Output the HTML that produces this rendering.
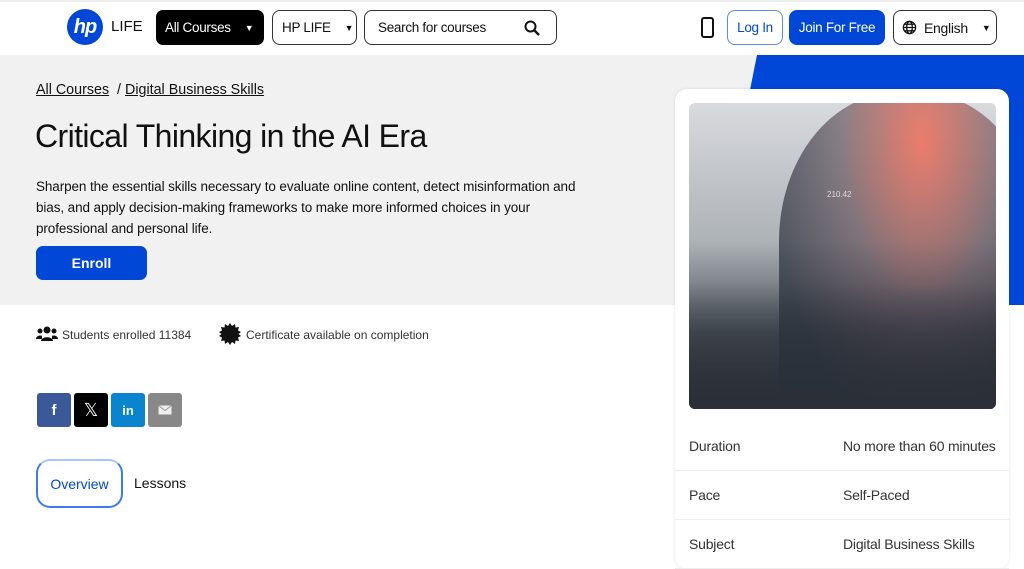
<!DOCTYPE html>
<html><head><meta charset="utf-8"><style>
*{box-sizing:border-box;margin:0;padding:0}
body{width:1024px;height:544px;overflow:hidden;background:#fff;font-family:"Liberation Sans",sans-serif;color:#111;position:relative}
.top{position:absolute;left:0;top:0;width:1024px;height:2px;background:#eee}
.hdr{position:absolute;top:0;left:0;width:1024px;height:55px;background:#fff}
.btn{position:absolute;top:10px;height:35px;border-radius:8px;font-size:13.5px;display:flex;align-items:center;padding:0 12px;white-space:nowrap;letter-spacing:-0.3px}
.hero{position:absolute;top:55px;left:0;width:1024px;height:250px;background:#f1f1f1}
.blue{position:absolute;top:55px;left:0;width:1024px;height:250px;background:#0047d8;clip-path:polygon(757px 0,1024px 0,1024px 250px,707px 250px)}
.card{position:absolute;left:675px;top:89px;width:334px;height:480px;background:#fff;border-radius:12px;box-shadow:0 0 3px rgba(0,0,0,.12)}
.img{position:absolute;left:14px;top:14px;width:307px;height:306px;border-radius:6px;overflow:hidden;background:linear-gradient(180deg,#d8dade 0%,#aeb3b8 45%,#4a5057 75%,#2b3038 100%)}
.row{position:absolute;left:0;width:334px;height:49px;border-bottom:1px solid #eee;font-size:14px;color:#333;letter-spacing:-0.2px}
.row span{position:absolute;top:16px}
.soc{position:absolute;top:393px;width:34px;height:34px;border-radius:3px;color:#fff;display:flex;align-items:center;justify-content:center;font-weight:bold;font-size:15px}
</style></head><body>
<div class="hdr"></div><div class="top"></div>
<div style="position:absolute;left:67px;top:9px;width:36px;height:36px;border-radius:50%;background:#0047d8;color:#fff;font-style:italic;font-weight:bold;font-size:20px;display:flex;align-items:center;justify-content:center;letter-spacing:-1px">hp</div>
<div style="position:absolute;left:111px;top:18px;font-size:15px">LIFE</div>
<div class="btn" style="left:156px;width:108px;background:#000;color:#fff;border-radius:7px;padding:0 9px">All Courses <span style="margin-left:14px;font-size:9px">▼</span></div>
<div class="btn" style="left:272px;width:85px;border:1px solid #333;padding:0 9px">HP LIFE <span style="margin-left:14px;font-size:9px">▼</span></div>
<div class="btn" style="left:364px;width:193px;border:1px solid #333;padding:0 13px">Search for courses
<svg style="position:absolute;right:16px;top:9px" width="16" height="16" viewBox="0 0 16 16"><circle cx="6.5" cy="6.5" r="5" fill="none" stroke="#111" stroke-width="2"/><path d="M10 10l5 5" stroke="#111" stroke-width="2.4"/></svg></div>
<div style="position:absolute;left:701px;top:17px;width:13px;height:21px;border:2.5px solid #111;border-radius:3px"></div>
<div class="btn" style="left:727px;width:56px;border:1px solid #5b8de8;color:#0047d8;justify-content:center;padding:0">Log In</div>
<div class="btn" style="left:789px;width:96px;background:#0047d8;color:#fff;justify-content:center;padding:0">Join For Free</div>
<div class="btn" style="left:893px;width:104px;border:1px solid #333;padding:0 8px">
<svg style="flex:none" width="15" height="15" viewBox="0 0 16 16" fill="none" stroke="#111" stroke-width="1.4"><circle cx="8" cy="8" r="6.5"/><ellipse cx="8" cy="8" rx="3" ry="6.5"/><path d="M1.5 8h13M2.5 4.5h11M2.5 11.5h11"/></svg>
<span style="margin-left:7px;font-size:14px">English</span><span style="margin-left:14px;font-size:9px">▼</span></div>
<div class="hero"></div><div class="blue"></div>
<div style="position:absolute;left:36px;top:82px;font-size:14.3px;letter-spacing:0"><span style="text-decoration:underline">All Courses</span> &nbsp;/ <span style="text-decoration:underline">Digital Business Skills</span></div>
<div style="position:absolute;left:35px;top:118px;font-size:32px;letter-spacing:-0.6px">Critical Thinking in the AI Era</div>
<div style="position:absolute;left:36px;top:176px;width:565px;font-size:13.5px;line-height:21px;letter-spacing:-0.1px">Sharpen the essential skills necessary to evaluate online content, detect misinformation and bias, and apply decision-making frameworks to make more informed choices in your professional and personal life.</div>
<div style="position:absolute;left:36px;top:246px;width:111px;height:34px;background:#0047d8;color:#fff;border-radius:7px;font-size:14px;font-weight:bold;display:flex;align-items:center;justify-content:center">Enroll</div>
<svg style="position:absolute;left:36px;top:326px" width="22" height="16" viewBox="0 0 22 16" fill="#111"><circle cx="11" cy="4" r="3.5"/><circle cx="4" cy="5" r="2.5"/><circle cx="18" cy="5" r="2.5"/><path d="M5 15c0-5 12-5 12 0zM0 13c0-4 6-4 6-3v3zM22 13c0-4-6-4-6-3v3z"/></svg>
<div style="position:absolute;left:62px;top:328px;font-size:12px;color:#333">Students enrolled 11384</div>
<svg style="position:absolute;left:219px;top:323px" width="22" height="22" viewBox="0 0 22 22"><polygon fill="#111" points="11,0 13,3 16,1 16.5,4.5 20,4 19,7.5 22,9 19.5,11 22,13 19,14.5 20,18 16.5,17.5 16,21 13,19 11,22 9,19 6,21 5.5,17.5 2,18 3,14.5 0,13 2.5,11 0,9 3,7.5 2,4 5.5,4.5 6,1 9,3"/></svg>
<div style="position:absolute;left:246px;top:328px;font-size:12px;color:#333">Certificate available on completion</div>
<div class="soc" style="left:37px;background:#3b5998">f</div>
<div class="soc" style="left:74px;background:#000;font-weight:normal;font-size:18px">𝕏</div>
<div class="soc" style="left:111px;background:#0a84ce;font-size:13px">in</div>
<div class="soc" style="left:148px;background:#888"><svg width="14" height="10"><rect x=".5" y=".5" width="13" height="9" fill="#eee"/><path d="M.5 .5l6.5 5 6.5-5" stroke="#999" fill="none"/></svg></div>
<div style="position:absolute;left:36px;top:459px;width:87px;height:49px;border:2px solid #3d7bf0;border-top-color:#a8c4f8;border-radius:14px;color:#0047d8;font-size:14px;display:flex;align-items:center;justify-content:center">Overview</div>
<div style="position:absolute;left:134px;top:475px;font-size:14px">Lessons</div>
<div class="card">
<div class="img">
<div style="position:absolute;left:90px;top:-10px;width:260px;height:330px;background:radial-gradient(ellipse at 55% 15%,rgba(240,110,90,.85),rgba(90,70,80,.6) 40%,rgba(40,48,60,.7) 75%);border-radius:45% 45% 10% 10%"></div>
<div style="position:absolute;left:0;top:180px;width:307px;height:126px;background:linear-gradient(180deg,rgba(40,46,54,0),#2a2f38)"></div>
<div style="position:absolute;left:138px;top:87px;font-size:8px;color:#ddd">210.42</div>
</div>
<div class="row" style="top:333px"><span style="left:14px">Duration</span><span style="left:168px">No more than 60 minutes</span></div>
<div class="row" style="top:382px"><span style="left:14px">Pace</span><span style="left:168px">Self-Paced</span></div>
<div class="row" style="top:431px"><span style="left:14px">Subject</span><span style="left:168px">Digital Business Skills</span></div>
</div>
</body></html>
